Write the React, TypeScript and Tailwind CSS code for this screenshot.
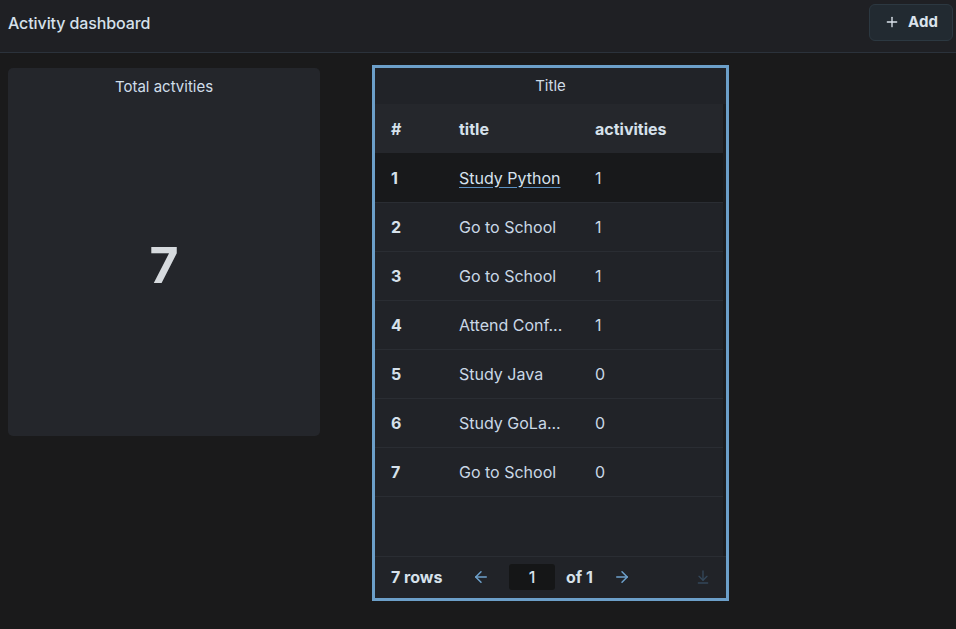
import { Plus, ArrowLeft, ArrowRight, ArrowDownToLine } from 'lucide-react';

const rows = [
  { id: 1, title: 'Study Python', activities: 1, link: true },
  { id: 2, title: 'Go to School', activities: 1 },
  { id: 3, title: 'Go to School', activities: 1 },
  { id: 4, title: 'Attend Conf...', activities: 1 },
  { id: 5, title: 'Study Java', activities: 0 },
  { id: 6, title: 'Study GoLa...', activities: 0 },
  { id: 7, title: 'Go to School', activities: 0 },
];

export default function App() {
  return (
    <div className="w-[956px] h-[629px] bg-[#1a1a1b] text-[#d6e1eb] font-['Inter',sans-serif] overflow-hidden">
      {/* Header */}
      <div className="h-[53px] bg-[#1f2024] border-b border-[#2b323b] flex items-center justify-between pl-2 pr-[3px]">
        <span className="text-[16px] font-medium tracking-[-0.1px] -mt-[7px]">Activity dashboard</span>
        <button className="h-[37px] w-[84px] -mt-[8px] flex items-center justify-center gap-2 rounded-md border border-[#2c3841] bg-[#222a31] text-[15px] font-bold text-[#dbe3ec]">
          <Plus className="w-4 h-4" strokeWidth={2} />
          Add
        </button>
      </div>

      <div className="flex items-start pt-[15px]">
        {/* Total card */}
        <div className="ml-2 w-[312px] h-[368px] rounded-[5px] bg-[#24262b] flex flex-col items-center">
          <span className="text-[15px] mt-[8px] text-[#d0deea]">Total actvities</span>
          <div className="flex-1 flex items-center justify-center pb-[4px]">
            <span className="text-[50px] leading-none font-bold text-[#d6dade]">7</span>
          </div>
        </div>

        {/* Table panel */}
        <div className="ml-[52px] -mt-[3px] w-[357px] h-[536px] border-[3px] border-[#6c9fc9] bg-[#212328] flex flex-col">
          <div className="h-[36px] flex items-center justify-center text-[15px] text-[#cfdbe6] pt-[1px]">Title</div>
          <div className="flex-1 pr-[3px] bg-[#1c1d20] flex flex-col">
            <div className="bg-[#212328] flex-1 flex flex-col">
              <div className="h-[49px] flex items-center bg-[#25272c] text-[16px] font-bold">
                <span className="w-[84px] pl-[16px]">#</span>
                <span className="w-[136px]">title</span>
                <span>activities</span>
              </div>
              {rows.map((r) => (
                <div
                  key={r.id}
                  className={
                    r.id === 1
                      ? 'h-[49px] flex items-center bg-[#18191b] text-[16px]'
                      : 'h-[49px] flex items-center border-t border-[#2a2d33] text-[16px]'
                  }
                >
                  <span className="w-[84px] pl-[16px] font-bold">{r.id}</span>
                  <span
                    className={
                      r.link
                        ? 'w-[136px] underline decoration-[#5b8fc0] underline-offset-[3px] text-[#d6e2ee]'
                        : 'w-[136px] text-[#cad8e6]'
                    }
                  >
                    {r.title}
                  </span>
                  <span className="text-[#cad8e6]">{r.activities}</span>
                </div>
              ))}
              <div className="flex-1 border-t border-[#2a2d33]" />
            </div>
          </div>
          <div className="h-[42px] border-t border-[#2a2d33] flex items-center text-[16px] font-bold pb-[2px]">
            <span className="pl-[16px] w-[97px]">7 rows</span>
            <ArrowLeft className="w-[18px] h-[18px] text-[#6ea1cc]" strokeWidth={2} />
            <div className="ml-[19px] w-[46px] h-[26px] rounded-[3px] bg-[#151617] flex items-center justify-center font-medium">1</div>
            <span className="ml-[11px]">of 1</span>
            <ArrowRight className="ml-[20px] w-[18px] h-[18px] text-[#6ea1cc]" strokeWidth={2} />
            <ArrowDownToLine className="ml-auto mr-[15px] w-[16px] h-[16px] text-[#33475a]" strokeWidth={2} />
          </div>
        </div>
      </div>
    </div>
  );
}
